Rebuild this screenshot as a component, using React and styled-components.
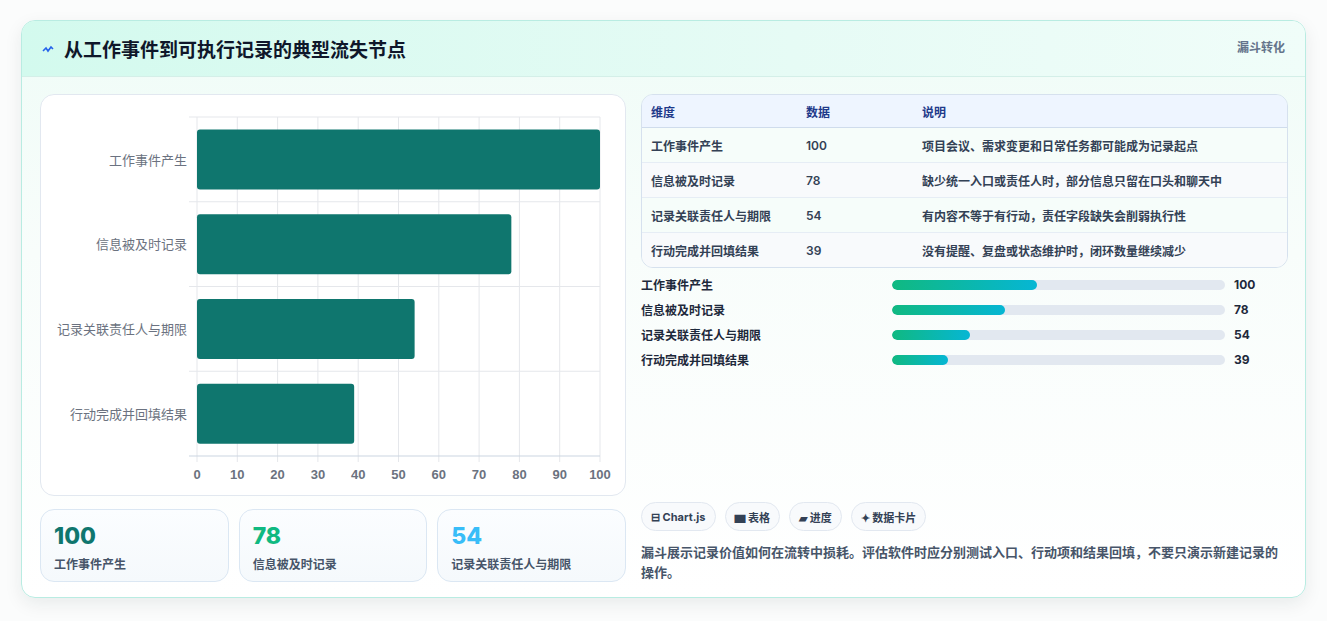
import React from "react";
import styled, { createGlobalStyle } from "styled-components";

const Global = createGlobalStyle`
  html,body{margin:0;padding:0;background:#fbfcfc;}
  body{font-family:Inter,"Noto Sans CJK SC",sans-serif;}
`;
const Page = styled.div`padding:20px 20px 22px 21px;`;
const Card = styled.div`
  width:1285px;height:578px;box-sizing:border-box;border:1px solid #b9ece2;border-radius:14px;
  background:linear-gradient(180deg,#effcf7 0%,#f8fdfb 40%,#ffffff 100%);
  box-shadow:0 6px 18px rgba(15,40,40,0.08);overflow:hidden;display:flex;flex-direction:column;
`;
const Header = styled.div`
  height:55px;flex:none;display:flex;align-items:center;justify-content:space-between;padding:0 20px;
  background:linear-gradient(90deg,#d3faee 0%,#e6fbf5 60%,#f0fdf9 100%);border-bottom:1px solid #d4efe8;
`;
const Title = styled.h1`margin:0;font-size:19px;font-weight:700;color:#0f172a;display:flex;align-items:center;gap:8px;`;
const Tag = styled.span`font-size:12px;font-weight:700;color:#64748b;align-self:flex-start;margin-top:17px;`;
const Body = styled.div`flex:1;display:grid;grid-template-columns:586px 647px;gap:15px;padding:17px 18px 17px 18px;`;
const Col = styled.div`display:flex;flex-direction:column;`;
const ChartBox = styled.div`height:402px;box-sizing:border-box;background:#fff;border:1px solid #e2e8f0;border-radius:14px;`;
const Stats = styled.div`margin-top:13px;display:grid;grid-template-columns:repeat(3,1fr);gap:10px;`;
const Stat = styled.div`height:73px;box-sizing:border-box;border:1px solid #dbe7f3;border-radius:14px;background:linear-gradient(180deg,#fbfdff,#f5f9fc);padding:12px 13px;`;
const StatNum = styled.div`font-size:23px;font-weight:800;color:${p=>p.c};line-height:28px;`;
const StatLabel = styled.div`font-size:12px;font-weight:600;color:#475569;margin-top:5px;`;
const Table = styled.table`width:100%;border-collapse:separate;border-spacing:0;border:1px solid #d6e1ee;border-radius:12px;overflow:hidden;font-size:12px;`;
const Th = styled.th`text-align:left;background:#eef5ff;color:#1e3a8a;font-weight:700;height:32px;padding:0 9px;border-bottom:1px solid #cfdcec;`;
const Td = styled.td`height:34px;padding:0 9px;font-weight:600;color:#334155;background:${p=>p.odd?"#f8fafc":"#f6fdfa"};border-top:${p=>p.first?"none":"1px solid #e6edf5"};`;
const Progress = styled.div`margin-top:7px;display:flex;flex-direction:column;gap:6px;`;
const PRow = styled.div`display:grid;grid-template-columns:242px 333px 1fr;gap:9px;align-items:center;height:19px;font-size:12px;font-weight:700;color:#1e293b;`;
const Track = styled.div`height:10px;border-radius:5px;background:#e2e8f0;overflow:hidden;`;
const Fill = styled.div`height:100%;border-radius:5px;background:linear-gradient(90deg,#10b981,#06b6d4);`;
const Chips = styled.div`margin-top:auto;display:flex;gap:9px;`;
const Chip = styled.span`height:29px;box-sizing:border-box;padding:0 9px;border:1px solid #e2e8f0;border-radius:15px;background:#f8fafc;display:inline-flex;align-items:center;gap:3px;font-size:11px;font-weight:700;color:#334155;`;
const Note = styled.p`margin:11px 0 0;font-size:13px;font-weight:600;line-height:20px;color:#475569;`;

const data=[["工作事件产生",100,"项目会议、需求变更和日常任务都可能成为记录起点"],["信息被及时记录",78,"缺少统一入口或责任人时，部分信息只留在口头和聊天中"],["记录关联责任人与期限",54,"有内容不等于有行动，责任字段缺失会削弱执行性"],["行动完成并回填结果",39,"没有提醒、复盘或状态维护时，闭环数量继续减少"]];

function Chart(){
  const x0=156,w=403,top=22,bot=361,band=(bot-top)/4;
  return <svg width="584" height="400" style={{display:"block"}}>
    {Array.from({length:11},(_,i)=>{const x=x0+i*w/10;return <g key={i}>
      <line x1={x} y1={top} x2={x} y2={bot+6} stroke="#e5e7eb"/>
      <text x={x} y={384} textAnchor="middle" fontSize="13" fontWeight="600" fill="#6b7280" fontFamily="Liberation Sans,sans-serif">{i*10}</text></g>})}
    {[0,1,2,3,4].map(i=><line key={i} x1={x0-8} x2={x0+w} y1={top+i*band} y2={top+i*band} stroke={i===4?"#cbd5e1":"#e5e7eb"}/>)}
    {data.map((d,i)=>{const y=top+i*band+12.5;return <g key={i}>
      <rect x={x0} y={y} width={w*d[1]/100} height={60} rx="3" fill="#0f766e"/>
      <text x={x0-10} y={y+35} textAnchor="end" fontSize="13" fill="#6b7280" fontFamily="Noto Sans CJK SC,sans-serif">{d[0]}</text></g>})}
  </svg>;
}

export default function App(){
  return <><Global/><Page><Card>
    <Header><Title><svg width="14" height="10" viewBox="0 0 14 10"><path d="M1 7l3-3 2 3 3-4 2 2" stroke="#2563eb" strokeWidth="1.6" fill="none"/></svg>从工作事件到可执行记录的典型流失节点</Title><Tag>漏斗转化</Tag></Header>
    <Body>
      <Col>
        <ChartBox><Chart/></ChartBox>
        <Stats>
          <Stat><StatNum c="#0f766e">100</StatNum><StatLabel>工作事件产生</StatLabel></Stat>
          <Stat><StatNum c="#10b981">78</StatNum><StatLabel>信息被及时记录</StatLabel></Stat>
          <Stat><StatNum c="#38bdf8">54</StatNum><StatLabel>记录关联责任人与期限</StatLabel></Stat>
        </Stats>
      </Col>
      <Col>
        <Table><thead><tr><Th style={{width:137}}>维度</Th><Th style={{width:98}}>数据</Th><Th>说明</Th></tr></thead>
          <tbody>{data.map((d,i)=><tr key={i}><Td odd={i%2} first={i===0}>{d[0]}</Td><Td odd={i%2} first={i===0}>{d[1]}</Td><Td odd={i%2} first={i===0}>{d[2]}</Td></tr>)}</tbody></Table>
        <Progress>{data.map((d,i)=><PRow key={i}><span>{d[0]}</span><Track><Fill style={{width:`${d[1]*0.435}%`}}/></Track><span>{d[1]}</span></PRow>)}</Progress>
        <Chips><Chip>⊟ Chart.js</Chip><Chip>▆ 表格</Chip><Chip>▰ 进度</Chip><Chip>✦ 数据卡片</Chip></Chips>
        <Note>漏斗展示记录价值如何在流转中损耗。评估软件时应分别测试入口、行动项和结果回填，不要只演示新建记录的操作。</Note>
      </Col>
    </Body>
  </Card></Page></>;
}
